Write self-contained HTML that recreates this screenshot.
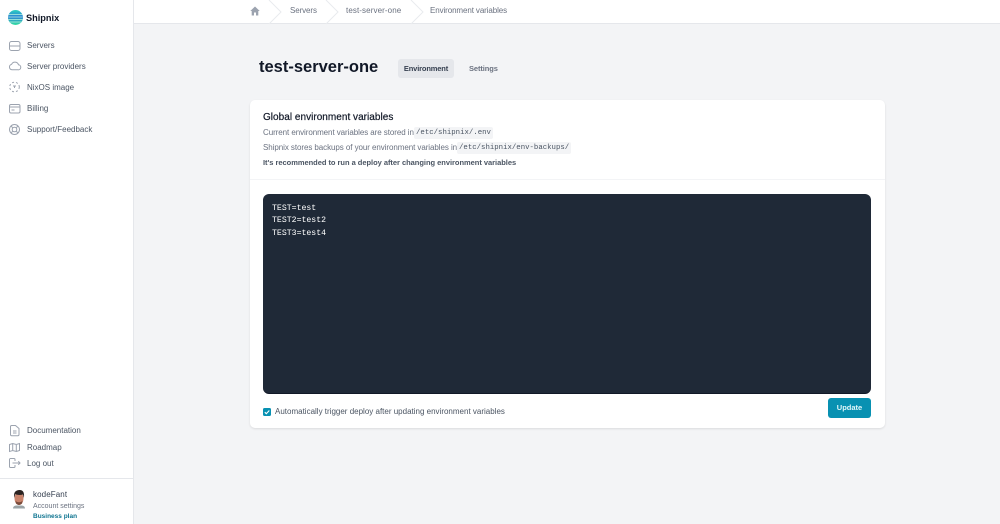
<!DOCTYPE html>
<html><head><meta charset="utf-8"><style>
*{box-sizing:border-box}
html,body{margin:0;padding:0;width:1000px;height:524px;overflow:hidden;background:#f3f4f6;font-family:"Liberation Sans",sans-serif}
.a{position:absolute;white-space:nowrap}
.nav{left:27px;font-size:8px;line-height:12px;color:#4b5563}
.bc{top:5px;font-size:8px;line-height:12px;color:#6b7280;letter-spacing:-.1px}
.p{left:263px;font-size:8px;line-height:12px;color:#6b7280;letter-spacing:-.05px}
.code{background:#f3f4f6;font-family:"Liberation Mono",monospace;font-size:7.35px;line-height:12px;color:#4b5563;padding:0 2px;border-radius:2px}
svg{position:absolute;overflow:visible}
.i{fill:none;stroke:#9ca3af;stroke-width:1}
</style></head><body>
<div class="a" style="left:0;top:0;width:134px;height:524px;background:#fff;border-right:1px solid #e5e7eb"></div>
<div class="a" style="left:134px;top:0;width:866px;height:24px;background:#fff;border-bottom:1px solid #e5e7eb"></div>

<svg style="left:8px;top:10px" width="15" height="15" viewBox="0 0 15 15"><defs><linearGradient id="g" x1="0" y1="0" x2="0" y2="1"><stop offset="0" stop-color="#2dd4bf"/><stop offset=".45" stop-color="#2b7fd6"/><stop offset="1" stop-color="#34e0a1"/></linearGradient></defs><circle cx="7.500" cy="7.500" r="7.500" fill="url(#g)"/><path d="M.5 4.500h14M.2 7h14.600M.2 9.500h14.600M1 12h13" stroke="#b8f5e0" stroke-width=".7"/></svg>
<div class="a" style="left:26px;top:11px;font-size:9.200px;line-height:14px;font-weight:700;color:#111827">Shipnix</div>

<svg class="i" style="left:9px;top:41px" width="11" height="10"><rect x=".5" y=".5" width="10.500" height="9" rx="2"/><path d="M.5 5h10.500"/></svg>
<div class="a nav" style="top:40px">Servers</div>
<svg class="i" style="left:9px;top:60px" width="12" height="10"><path d="M3 9.800h6a2.500 2.500 0 0 0 .5-5A3.700 3.700 0 0 0 2.600 4.300 2.800 2.800 0 0 0 3 9.800z"/></svg>
<div class="a nav" style="top:61px">Server providers</div>
<svg class="i" style="left:9px;top:82px" width="11" height="10"><circle cx="5.500" cy="5" r="4.800" stroke-dasharray="2 2"/><path d="M4 4h3M5.500 4v2"/></svg>
<div class="a nav" style="top:82px">NixOS image</div>
<svg class="i" style="left:9px;top:104px" width="11" height="9"><rect x=".5" y=".5" width="10.500" height="8.500" rx="1.500"/><path d="M.5 3h10.500M2.500 6h3"/></svg>
<div class="a nav" style="top:103px">Billing</div>
<svg class="i" style="left:9px;top:124px" width="11" height="11"><circle cx="5.500" cy="5.500" r="5"/><circle cx="5.500" cy="5.500" r="2.300"/><path d="M2 2l1.800 1.800M9 2L7.200 3.800M2 9l1.800-1.800M9 9L7.200 7.200"/></svg>
<div class="a nav" style="top:124px">Support/Feedback</div>

<svg class="i" style="left:10px;top:425px" width="9" height="11"><path d="M1.500.5h4L9 3.500v6a1.200 1.200 0 0 1-1.200 1.200H1.700A1.200 1.200 0 0 1 .5 9.500V1.700A1.200 1.200 0 0 1 1.500.5zM3 6h3.500M3 8h3.500"/></svg>
<div class="a nav" style="top:425px">Documentation</div>
<svg class="i" style="left:9px;top:443px" width="11" height="9"><path d="M.5 1.500l3.200-1 3.600 1 3.200-1v7l-3.200 1-3.600-1-3.200 1zM3.700.5v7M7.300 1.500v7"/></svg>
<div class="a nav" style="top:442px">Roadmap</div>
<svg class="i" style="left:9px;top:458px" width="12" height="10"><path d="M6 3V1.500a1 1 0 0 0-1-1H1.500a1 1 0 0 0-1 1v7a1 1 0 0 0 1 1H5a1 1 0 0 0 1-1V7M3.500 5H11M9.300 3.200L11 5 9.300 6.800"/></svg>
<div class="a nav" style="top:458px">Log out</div>

<div class="a" style="left:0;top:478px;width:133px;height:1px;background:#e5e7eb"></div>
<svg style="left:12px;top:490px" width="14" height="19" viewBox="0 0 14 19"><path d="M1 18.500q0-2.500 3-3h6q3 .5 3 3z" fill="#9aa3a6"/><ellipse cx="7" cy="8.500" rx="4.500" ry="6.500" fill="#c9836b"/><path d="M2.200 8Q1 .5 7 0t4.900 8L11 4.500Q7 5.500 3.200 4.300z" fill="#2b2321"/><path d="M3.500 11q3.500 2.500 7 0l-.5 2.500q-3 3-6 0z" fill="#7a4c3c"/></svg>
<div class="a" style="left:33px;top:489px;font-size:8px;line-height:12px;color:#374151;letter-spacing:.1px">kodeFant</div>
<div class="a" style="left:33px;top:501px;font-size:7px;line-height:11px;color:#6b7280">Account settings</div>
<div class="a" style="left:33px;top:511px;font-size:6.500px;line-height:11px;font-weight:700;color:#0e7490">Business plan</div>

<svg style="left:250px;top:6px" width="10" height="10" viewBox="0 0 10 10"><path d="M5 .5L.3 5h1.400v4.500h2.300V6.500h2v3h2.300V5h1.400z" fill="#9ca3af"/></svg>
<svg style="left:268px;top:0" width="160" height="24" fill="none" stroke="#e9ebee"><path d="M1 0l12 12L1 24M58 0l12 12L58 24M143 0l12 12L143 24"/></svg>
<div class="a bc" style="left:290px">Servers</div>
<div class="a bc" style="left:346px;letter-spacing:.1px">test-server-one</div>
<div class="a bc" style="left:430px">Environment variables</div>

<div class="a" style="left:259px;top:58px;font-size:16.500px;line-height:19px;font-weight:700;color:#111827">test-server-one</div>
<div class="a" style="left:398px;top:59px;width:56px;height:19px;background:#e5e7eb;border-radius:3px;font-size:7.500px;line-height:19px;text-align:center;font-weight:700;color:#374151;letter-spacing:-.15px">Environment</div>
<div class="a" style="left:469px;top:62px;font-size:7.500px;line-height:13px;font-weight:700;color:#6b7280;letter-spacing:-.1px">Settings</div>

<div class="a" style="left:250px;top:100px;width:635px;height:328px;background:#fff;border-radius:5px;box-shadow:0 1px 2px rgba(0,0,0,.1)"></div>
<div class="a" style="left:263px;top:111px;font-size:10px;line-height:14px;color:#111827;letter-spacing:.03px;-webkit-text-stroke:.2px #111827">Global environment variables</div>
<div class="a p" style="top:127px;letter-spacing:-.07px">Current environment variables are stored in</div>
<div class="a code" style="left:414px;top:127px">/etc/shipnix/.env</div>
<div class="a p" style="top:142px;letter-spacing:-.07px">Shipnix stores backups of your environment variables in</div>
<div class="a code" style="left:457px;top:142px">/etc/shipnix/env-backups/</div>
<div class="a p" style="top:157px;font-size:7.500px;font-weight:700;color:#4b5563;letter-spacing:-.03px">It's recommended to run a deploy after changing environment variables</div>
<div class="a" style="left:250px;top:179px;width:635px;height:1px;background:#f3f4f6"></div>

<div class="a" style="left:263px;top:194px;width:608px;height:199.500px;background:#1f2937;border-radius:6px;border-bottom:1px solid #111827"></div>
<div class="a" style="left:272px;top:203px;font-family:'Liberation Mono',monospace;font-size:8.200px;line-height:12.400px;color:#fff;white-space:pre">TEST=test
TEST2=test2
TEST3=test4</div>

<svg style="left:263px;top:408px" width="8" height="8" viewBox="0 0 8 8"><rect width="8" height="8" rx="1.500" fill="#0891b2"/><path d="M1.800 4.200l1.500 1.500 3-3.200" fill="none" stroke="#fff" stroke-width="1.100"/></svg>
<div class="a" style="left:275px;top:406px;font-size:8px;line-height:12px;color:#4b5563">Automatically trigger deploy after updating environment variables</div>
<div class="a" style="left:828px;top:398px;width:43px;height:20px;background:#0891b2;border-radius:3px;font-size:7.500px;line-height:20px;text-align:center;font-weight:700;color:#e0f7fa">Update</div>
</body></html>
